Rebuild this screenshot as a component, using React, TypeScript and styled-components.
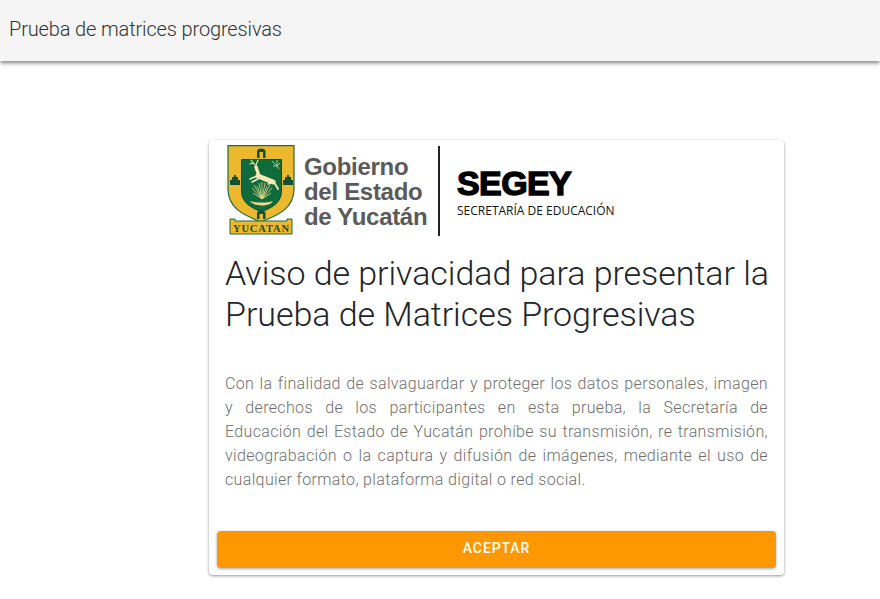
import React from 'react'
import styled, { createGlobalStyle } from 'styled-components'

const GlobalStyle = createGlobalStyle`
  html, body {
    margin: 0;
    padding: 0;
    background: #fff;
    font-family: Roboto, "Liberation Sans", sans-serif;
  }
`

const Page = styled.div`
  width: 880px;
  height: 599px;
  overflow: hidden;
`

const Toolbar = styled.header`
  display: flex;
  align-items: center;
  height: 61px;
  padding: 0 9px 4px;
  box-sizing: border-box;
  background: #f5f5f5;
  box-shadow: 0 2px 4px rgba(0, 0, 0, 0.5);
  color: #333;
  font-size: 20px;
  font-weight: 300;
  letter-spacing: -0.14px;
`

const Main = styled.main`
  display: flex;
  padding: 79px 0 0 209px;
`

const Card = styled.section`
  display: flex;
  flex-direction: column;
  width: 575px;
  height: 435px;
  box-sizing: border-box;
  padding: 5px 8px 7px;
  border-radius: 4px;
  background: #fff;
  box-shadow: 0 1px 3px rgba(0, 0, 0, 0.42);
`

const LogoRow = styled.div`
  display: flex;
  align-items: center;
  height: 92px;
  padding-left: 10px;
`

const GovName = styled.div`
  width: 135px;
  margin-left: 7px;
  color: #5a5a5a;
  font-family: "Liberation Sans", Arial, sans-serif;
  font-size: 24px;
  font-weight: 700;
  line-height: 25px;
  letter-spacing: -0.3px;
`

const Divider = styled.div`
  width: 2px;
  height: 90px;
  margin: 0 17px 0 -1px;
  background: #222;
`

const Segey = styled.div`
  display: flex;
  flex-direction: column;
  padding-top: 1px;
`

const SegeyName = styled.div`
  color: #000;
  font-family: "Liberation Sans", Arial, sans-serif;
  font-size: 34px;
  font-weight: 700;
  line-height: 34px;
  letter-spacing: -0.6px;
  -webkit-text-stroke: 1.4px #000;
`

const SegeyLabel = styled.div`
  margin-top: 4px;
  color: #111;
  font-family: "Open Sans", sans-serif;
  font-size: 12px;
  font-weight: 400;
  line-height: 14px;
  white-space: nowrap;
`

const Title = styled.h1`
  margin: 16px 0 0;
  padding: 0 4px 0 8px;
  color: #212529;
  font-size: 34px;
  font-weight: 300;
  line-height: 41px;
  letter-spacing: -0.05px;
`

const Body = styled.div`
  margin: 37px 0 0;
  padding: 0 8px;
  color: #6f6f6f;
  font-size: 16px;
  font-weight: 300;
  line-height: 24px;
  letter-spacing: 0.35px;
`

const BodyLine = styled.p<{ $last?: boolean }>`
  margin: 0;
  text-align-last: ${({ $last }) => ($last ? 'left' : 'justify')};
`

const AcceptButton = styled.button`
  height: 37px;
  margin-top: auto;
  padding: 0 0 3px;
  border: 0;
  border-radius: 4px;
  background: #ff9800;
  box-shadow: 0 1px 3px rgba(0, 0, 0, 0.35);
  color: #fff;
  font-family: Roboto, sans-serif;
  font-size: 14px;
  font-weight: 500;
  letter-spacing: 0.9px;
`

const bodyLines = [
  'Con la finalidad de salvaguardar y proteger los datos personales, imagen',
  'y derechos de los participantes en esta prueba, la Secretaría de',
  'Educación del Estado de Yucatán prohíbe su transmisión, re transmisión,',
  'videograbación o la captura y difusión de imágenes, mediante el uso de',
  'cualquier formato, plataforma digital o red social.',
]

const agaveTips = [
  [25, 43],
  [27, 40],
  [30, 41],
  [32, 38],
  [35, 37],
  [38, 38],
  [40, 41],
  [43, 40],
  [45, 43],
  [26, 48],
  [44, 48],
]

const Shield = () => (
  <svg width="70" height="92" viewBox="0 0 70 92" aria-hidden="true">
    <path d="M1 0.7H67V44C67 65 48 71 34 77C20 71 1 65 1 44Z" fill="#ecb92e" stroke="#1f6b42" strokeWidth="1.2" />
    <path d="M14.5 14.5H54.5V46C54.5 59 43 63 34.5 67C26 63 14.5 59 14.5 46Z" fill="#0f6b3c" stroke="#0b4d2c" />
    <path d="M30 13V6C30 2.5 38.5 2.5 38.5 6V13H36V7H32.5V13Z" fill="#14502f" />
    <path d="M30 74V68C30 64.5 38.5 64.5 38.5 68V74H36V69H32.5V74Z" fill="#14502f" />
    <path d="M3 40V35H5V32H7V30H9V32H11V35H13V40Z" fill="#14502f" />
    <path d="M56 40V35H58V32H60V30H62V32H64V35H66V40Z" fill="#14502f" />
    <g fill="none" stroke="#f6e9b5" strokeLinecap="round">
      <path d="M29 22L32 31" strokeWidth="3.4" />
      <path d="M31 31L46 37" strokeWidth="5" />
      <path d="M47 37L51 44" strokeWidth="1.8" />
      <path d="M45 38L41 39" strokeWidth="1.4" />
      <path d="M30 31L23 34M31 34L25 37" strokeWidth="1.6" />
      <path d="M28 20L24 15M29 20L31 15M26 18L23 19" strokeWidth="1.1" />
    </g>
    <g stroke="#ead98f" strokeWidth="0.8">
      <path d="M50 21L45 16M50 21L50 15M50 21L53 18M50 21L46 21M50 21L52 24" />
      {agaveTips.map(([x, y]) => (
        <line key={`${x}-${y}`} x1="35" y1="54" x2={x} y2={y} />
      ))}
    </g>
    <path d="M23 56C29 58 40 58 46 56C43 62 27 62 23 56Z" fill="#ead98f" />
    <path d="M3 74H8V76H60V74H65V89H3Z" fill="#ecb92e" stroke="#1f6b42" />
    <text
      x="34"
      y="87"
      fill="#14502f"
      fontFamily="Liberation Serif, serif"
      fontSize="10.5"
      fontWeight="700"
      textAnchor="middle"
      textLength="56"
    >
      YUCATAN
    </text>
  </svg>
)

export default function App() {
  return (
    <Page>
      <GlobalStyle />
      <Toolbar>Prueba de matrices progresivas</Toolbar>
      <Main>
        <Card>
          <LogoRow>
            <Shield />
            <GovName>
              Gobierno
              <br />
              del Estado
              <br />
              de Yucatán
            </GovName>
            <Divider />
            <Segey>
              <SegeyName>SEGEY</SegeyName>
              <SegeyLabel>SECRETARÍA DE EDUCACIÓN</SegeyLabel>
            </Segey>
          </LogoRow>
          <Title>Aviso de privacidad para presentar la Prueba de Matrices Progresivas</Title>
          <Body>
            {bodyLines.map((line, i) => (
              <BodyLine key={line} $last={i === bodyLines.length - 1}>
                {line}
              </BodyLine>
            ))}
          </Body>
          <AcceptButton>ACEPTAR</AcceptButton>
        </Card>
      </Main>
    </Page>
  )
}
